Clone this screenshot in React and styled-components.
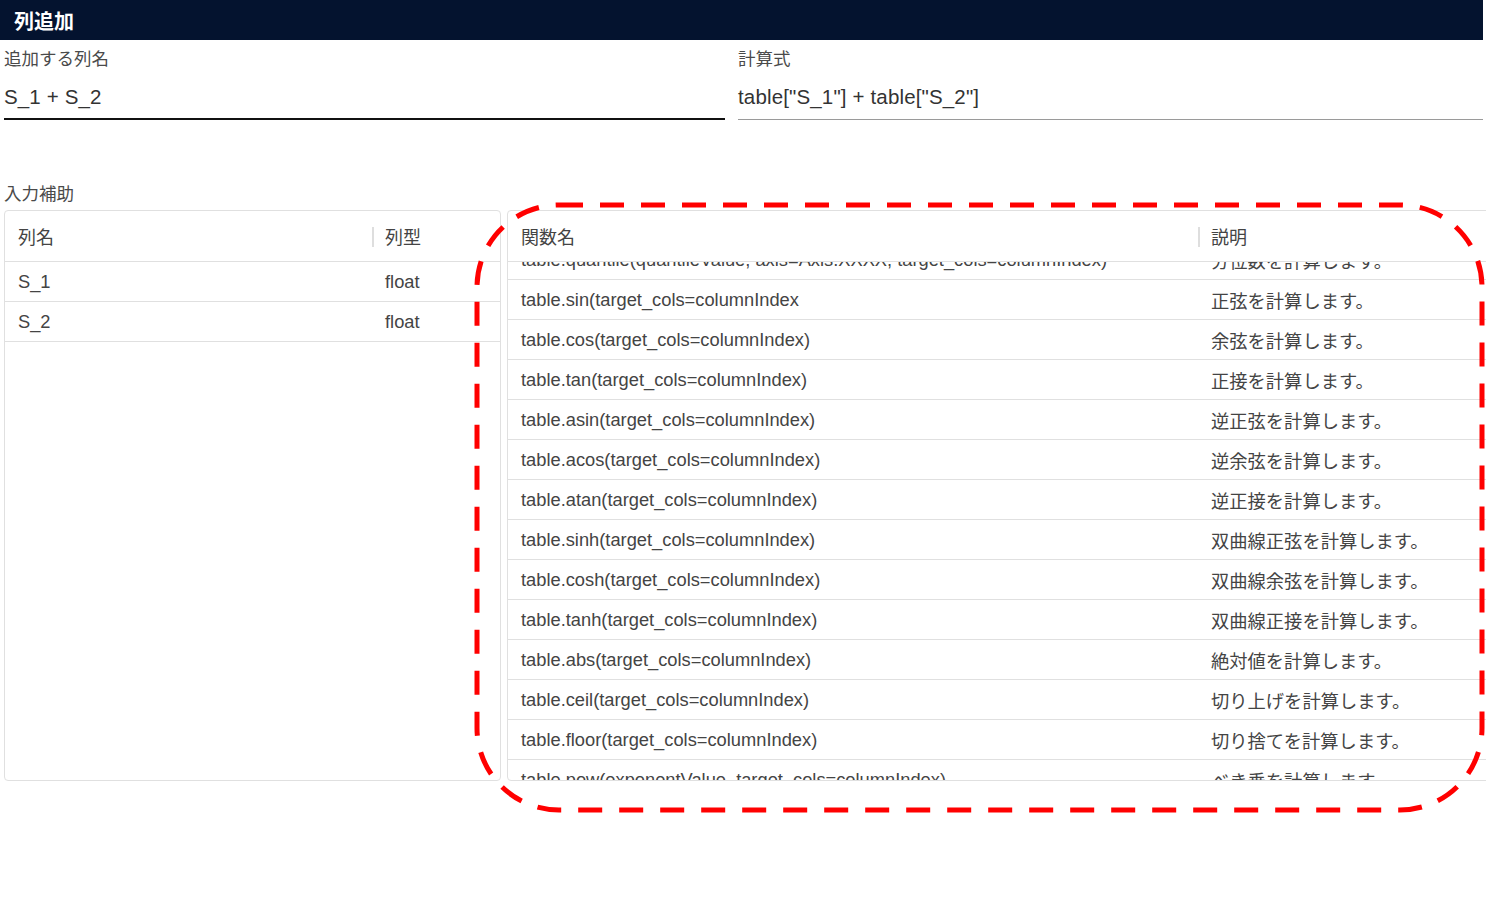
import React from "react";
import styled, { createGlobalStyle } from "styled-components";

const Global = createGlobalStyle`
  html, body { margin: 0; padding: 0; background: #fff; overflow: hidden; }
  body { font-family: "Liberation Sans", Arial, "Noto Sans CJK JP", sans-serif; color: #333; }
`;

const Page = styled.div`
  position: relative;
  width: 1483px;
  height: 915px;
`;

const TitleBar = styled.div`
  height: 40px;
  background: #04132f;
  display: flex;
  align-items: center;
  padding-left: 14px;
  color: #fff;
  font-weight: 700;
  font-size: 20px;
  box-sizing: border-box;
`;

const Fields = styled.div`
  display: grid;
  grid-template-columns: 721px 1fr;
  column-gap: 13px;
  padding-left: 4px;
  margin-top: 7px;
`;

const Field = styled.div`
  display: flex;
  flex-direction: column;
`;

const Label = styled.div`
  font-size: 17.5px;
  color: #4a4a4a;
  height: 24px;
  line-height: 24px;
`;

const Value = styled.div`
  font-size: 20.5px;
  letter-spacing: 0.15px;
  color: #333;
  height: 49px;
  line-height: 52px;
  border-bottom: ${(p) => (p.$focused ? "2px solid #111" : "1px solid #9a9a9a")};
  box-sizing: border-box;
  white-space: nowrap;
`;

const SectionLabel = styled(Label)`
  margin-top: 62px;
  padding-left: 4px;
`;

const Tables = styled.div`
  display: grid;
  grid-template-columns: 497px 1000px;
  column-gap: 6px;
  padding-left: 4px;
  margin-top: 4px;
`;

const Card = styled.div`
  border: 1px solid #e0e0e0;
  border-radius: 4px;
  height: 571px;
  box-sizing: border-box;
  overflow: hidden;
  display: flex;
  flex-direction: column;
`;

const HeadRow = styled.div`
  display: grid;
  grid-template-columns: ${(p) => p.$cols};
  height: 51px;
  flex: none;
  border-bottom: 1px solid #e0e0e0;
  box-sizing: border-box;
  align-items: center;
  font-size: 18px;
  color: #444;
`;

const HeadCell = styled.div`
  display: flex;
  align-items: center;
  height: 100%;
  padding-left: 13px;
  position: relative;
  ${(p) =>
    p.$sep &&
    `&::before { content: ""; position: absolute; left: 0; top: 16px; width: 2px; height: 20px; background: #dedede; }`}
`;

const Body = styled.div`
  flex: 1;
  overflow: hidden;
`;

const BodyInner = styled.div`
  margin-top: ${(p) => p.$offset || 0}px;
`;

const Row = styled.div`
  display: grid;
  grid-template-columns: ${(p) => p.$cols};
  height: 40px;
  border-bottom: 1px solid #e0e0e0;
  box-sizing: border-box;
  align-items: center;
  font-size: 18.3px;
  color: #444;
`;

const Cell = styled.div`
  padding-left: 13px;
  white-space: nowrap;
  overflow: hidden;
`;

const Annotation = styled.svg`
  position: absolute;
  left: 472px;
  top: 200px;
  pointer-events: none;
`;

const funcs = [
  ["table.quantile(quantileValue, axis=Axis.XXXX, target_cols=columnIndex)", "分位数を計算します。"],
  ["table.sin(target_cols=columnIndex", "正弦を計算します。"],
  ["table.cos(target_cols=columnIndex)", "余弦を計算します。"],
  ["table.tan(target_cols=columnIndex)", "正接を計算します。"],
  ["table.asin(target_cols=columnIndex)", "逆正弦を計算します。"],
  ["table.acos(target_cols=columnIndex)", "逆余弦を計算します。"],
  ["table.atan(target_cols=columnIndex)", "逆正接を計算します。"],
  ["table.sinh(target_cols=columnIndex)", "双曲線正弦を計算します。"],
  ["table.cosh(target_cols=columnIndex)", "双曲線余弦を計算します。"],
  ["table.tanh(target_cols=columnIndex)", "双曲線正接を計算します。"],
  ["table.abs(target_cols=columnIndex)", "絶対値を計算します。"],
  ["table.ceil(target_cols=columnIndex)", "切り上げを計算します。"],
  ["table.floor(target_cols=columnIndex)", "切り捨てを計算します。"],
  ["table.pow(exponentValue, target_cols=columnIndex)", "べき乗を計算します。"],
];

const LEFT_COLS = "367px 1fr";
const RIGHT_COLS = "690px 1fr";

export default function App() {
  return (
    <Page>
      <Global />
      <TitleBar>列追加</TitleBar>
      <Fields>
        <Field>
          <Label>追加する列名</Label>
          <Value $focused>S_1 + S_2</Value>
        </Field>
        <Field>
          <Label>計算式</Label>
          <Value>table["S_1"] + table["S_2"]</Value>
        </Field>
      </Fields>
      <SectionLabel>入力補助</SectionLabel>
      <Tables>
        <Card>
          <HeadRow $cols={LEFT_COLS}>
            <HeadCell>列名</HeadCell>
            <HeadCell $sep>列型</HeadCell>
          </HeadRow>
          <Body>
            <Row $cols={LEFT_COLS}>
              <Cell>S_1</Cell>
              <Cell>float</Cell>
            </Row>
            <Row $cols={LEFT_COLS}>
              <Cell>S_2</Cell>
              <Cell>float</Cell>
            </Row>
          </Body>
        </Card>
        <Card>
          <HeadRow $cols={RIGHT_COLS}>
            <HeadCell>関数名</HeadCell>
            <HeadCell $sep>説明</HeadCell>
          </HeadRow>
          <Body>
            <BodyInner $offset={-22}>
              {funcs.map(([f, d]) => (
                <Row key={f} $cols={RIGHT_COLS}>
                  <Cell>{f}</Cell>
                  <Cell>{d}</Cell>
                </Row>
              ))}
            </BodyInner>
          </Body>
        </Card>
      </Tables>
      <Annotation width="1014" height="616" viewBox="0 0 1014 616">
        <rect
          x="5"
          y="5"
          width="1005"
          height="605"
          rx="82"
          ry="82"
          fill="none"
          stroke="#ff0000"
          strokeWidth="5"
          strokeDasharray="24 17"
        />
      </Annotation>
    </Page>
  );
}
